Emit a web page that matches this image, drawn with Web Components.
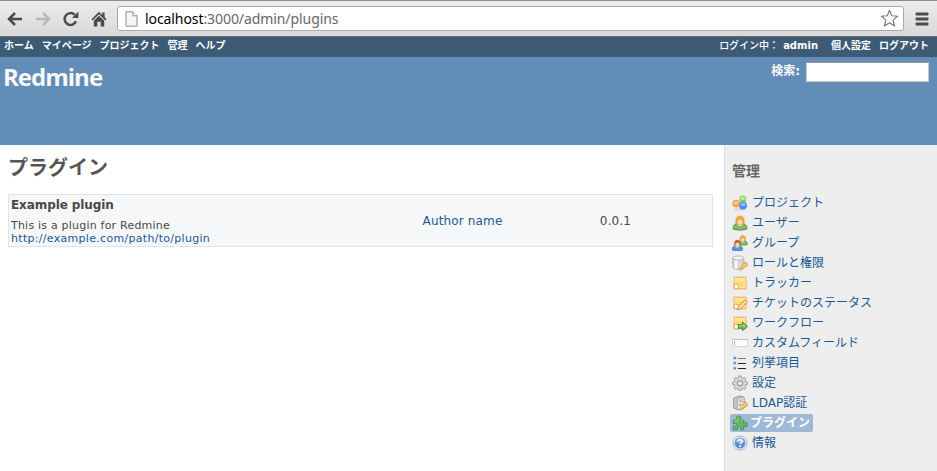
<!DOCTYPE html>
<html lang="ja">
<head>
<meta charset="utf-8">
<title>Redmine</title>
<style>
html,body{margin:0;height:100%;overflow:hidden;background:#fff}
body{font-family:"DejaVu Sans","Noto Sans CJK JP",sans-serif;font-size:12px;color:#484848}
</style>
</head>
<body>
<redmine-app></redmine-app>
<script>
const define = (name, html) => customElements.define(name, class extends HTMLElement {
  constructor() {
    super();
    const t = document.createElement('template');
    t.innerHTML = html;
    this.attachShadow({mode: 'open'}).append(t.content.cloneNode(true));
  }
});

const note = `<path d="M2 2.2h12v11.6H2z" fill="#fff6dc" stroke="#eea64a"/><path d="M3.2 3.4h9.6v9.2H6.8L3.2 9.4z" fill="#fcdc6c"/><path d="M3.2 3.4h9.6v3H3.2z" fill="#fde795"/><path d="M2.2 9l4 .8.6 3.9H2.2z" fill="#fff" stroke="#e79b35" stroke-width=".8"/>`;
const keyShape = `<path d="M7.6 13.5l3-2.8q-.5-2.2 1.2-3.2 2.2-.9 3.3 1 .8 2.3-1.2 3.4-1 .4-1.8 0l-.9.9-.2 1-1 .1-.2 1-1.5.2z" fill="#fbd268" stroke="#c8902c" stroke-width=".8"/><circle cx="13.2" cy="9.2" r=".9" fill="#fff8dc" stroke="#c8902c" stroke-width=".4"/>`;
const person = (x, y, s, shirt, edge, hair) => `<g transform="translate(${x} ${y}) scale(${s})"><path d="M1.1 14.3Q.8 9.4 4.6 9h6.8q4 .4 3.5 5.3-6.9 1.8-13.8 0z" fill="${shirt}" stroke="${edge}" stroke-width=".8"/><path d="M5 9q3 4.4 6 0l-1.2-1.5H6.2z" fill="#fbd9b0"/><ellipse cx="8" cy="6.2" rx="3.1" ry="3.6" fill="#fddcb4" stroke="#d09450" stroke-width=".5"/><path d="M3.8 8.8Q2.8.9 8 .9t4.2 7.9l-1.3-.7q.2-3.4-1.8-3.9-2.4.8-3.8.6-.2 2-.1 3.4z" fill="${hair}" stroke="#c8842c" stroke-width=".4"/></g>`;

const icons = {
  projects: `<ellipse cx="8" cy="14.5" rx="6.5" ry=".9" fill="#cfcfcf"/><circle cx="10.9" cy="4" r="3.4" fill="#80d455"/><circle cx="4.1" cy="8.6" r="3.8" fill="#f7a24a"/><circle cx="11" cy="10.4" r="3.9" fill="#4a8ced"/><ellipse cx="10.9" cy="3.4" rx="2.3" ry="1.8" fill="#b6f08f"/><ellipse cx="4" cy="7.7" rx="2.5" ry="1.8" fill="#ffc488"/><ellipse cx="11" cy="9.4" rx="2.6" ry="1.8" fill="#8abcff"/>`,
  user: person(0, 0, 1, '#83b769', '#4c8645', '#f3a935'),
  group: person(5.3, 0, .68, '#83b769', '#4c8645', '#f3a935') + person(-.6, 4.4, .75, '#5694e5', '#2d66b6', '#ad6840'),
  roles: `<path d="M.8 3v9.3c0 1.2 2.4 2 5.5 2s5.5-.8 5.5-2V3z" fill="#d7d7d7" stroke="#a9a9a9" stroke-width=".8"/><path d="M2.8 5v8.4h2.6V5z" fill="#fafafa"/><ellipse cx="6.3" cy="3" rx="5.5" ry="2" fill="#f5f5f5" stroke="#a9a9a9" stroke-width=".8"/>${keyShape}`,
  tracker: note,
  status: `${note}<path d="M5.4 14.8l1-3.4 6.9-6.6 2.2 2.2-7 6.9z" fill="#ffd77d" stroke="#bf8038" stroke-width=".8"/><path d="M7.5 12.7l6.6-6.6" stroke="#fff3c0"/>`,
  workflow: `${note}<path d="M6.2 9.6h4.3V7l5 4.4-5 4.3v-2.5H6.2z" fill="#7cbd60" stroke="#3b8636" stroke-width=".9"/><path d="M7 10.7h4.4V9.4l2.3 1.9" fill="none" stroke="#b9e2a2" stroke-width=".8"/>`,
  field: `<path d="M.5 4.5h15v7H.5z" fill="#fcfcfc" stroke="#d2d2d2"/><path d="M.5 4.5h15" stroke="#c0c0c0"/><path d="M2.5 6v4" stroke="#aaa"/>`,
  list: `<g fill="#a9c2f6"><rect x="1" y="1.2" width="3.4" height="3.2" rx=".6"/><rect x="1" y="6.3" width="3.4" height="3.2" rx=".6"/><rect x="1" y="11.4" width="3.4" height="3.2" rx=".6"/></g><g fill="#6181bd"><path d="M2 2.5h2v1.5H2zM2 7.6h2v1.5H2zM2 12.7h2v1.5H2z"/></g><path d="M6 3.5h8" stroke="#777"/><path d="M6 8.5h8M6 13.5h8" stroke="#222"/>`,
  settings: `<path d="M6.9.9h2.2l.4 2.1 1.3.5 1.7-1.2 1.5 1.5-1.1 1.8.5 1.2 2 .4v2.2l-2 .4-.5 1.3 1.1 1.7-1.5 1.6-1.7-1.1-1.3.5-.4 2H6.9l-.4-2-1.3-.5-1.7 1.1L2 12.8l1.1-1.7-.5-1.3-2-.4V7.2l2-.4.5-1.2L2 3.8l1.5-1.5 1.7 1.2L6.5 3z" fill="#dcdcdc" stroke="#888" stroke-width=".8"/><circle cx="8" cy="8.3" r="3.9" fill="#c6c6c6"/><circle cx="8" cy="8.3" r="2.5" fill="#eee" stroke="#777" stroke-width=".8"/>`,
  ldap: `<path d="M1.6 3.2L7 1l5 1.1v10.8L6 15l-4.4-1.9z" fill="#c5c5c5" stroke="#8e8e8e" stroke-width=".8"/><path d="M5.6 3.6L12 2.3v10.8l-6.4 1.7z" fill="#f1f1f1" stroke="#999" stroke-width=".7"/><path d="M7.2 5.4l3.4-.7M7.2 7.2l3.4-.7" stroke="#9c9c9c"/><path d="M7.2 9.5l2-.5v1.6l-2 .5z" fill="#59b34a"/>${keyShape}`,
  plugin: `<path d="M1.2 5h3.9c.3-1-.7-1.5-.7-2.6 0-2 4.5-2 4.5.1 0 1.1-.9 1.5-.7 2.5h3.5v3.3c1 .2 1.2-.8 2.2-.8 2.3 0 2.2 4.3 0 4.3-1 0-1.2-.9-2.2-.7v3.7H8.3c-.2-1 .6-1.2.6-2 0-1.7-3.8-1.7-3.8 0 0 .8.8 1 .6 2H1.2v-3.6c1 .2 1.2.6 2 .5 1.7-.2 1.6-3.4 0-3.4-.9 0-1 .6-2 .6z" fill="#66b565" stroke="#3b9044" stroke-width=".8"/><path d="M2.3 5.9h4c.2-1.6-.7-2.2-.7-3.2M9 5.9h1.8" fill="none" stroke="#a0d796"/>`,
  info: `<circle cx="8" cy="8" r="7" fill="#f4f8fe" stroke="#85abd9" stroke-width=".9"/><circle cx="8" cy="8" r="5.5" fill="#5d8fcd"/><path d="M3.2 6.9Q5 3 8 3t4.8 3.9Q8 8.5 3.2 6.9z" fill="#8fb5e1"/><path d="M6 6.5q0-1.8 2.1-1.8 2 0 2 1.6 0 .9-1 1.5-.9.5-.9 1.3" fill="none" stroke="#fff" stroke-width="1.4"/><circle cx="8.1" cy="11" r=".9" fill="#fff"/>`
};

customElements.define('menu-icon', class extends HTMLElement {
  constructor() {
    super();
    this.attachShadow({mode: 'open'}).innerHTML = `<style>:host{display:block;width:16px;height:16px;flex:none}svg{display:block}</style><svg width="16" height="16" viewBox="0 0 16 16">${icons[this.getAttribute('name')]}</svg>`;
  }
});

define('side-item', `<style>
:host{display:flex;height:20px;align-items:center;color:#1a5a94}
.row{display:flex;align-items:center;height:20px;padding:0 3px 0 2px;border-radius:2px;white-space:nowrap}
.label{margin-left:4px;line-height:20px}
:host([selected]) .row{height:18px;background:#9db9d5;color:#fff;font-weight:700}
:host([selected]) .label{margin-left:2px;line-height:18px}
</style><div class="row"><slot name="icon"></slot><span class="label"><slot></slot></span></div>`);

define('admin-sidebar', `<style>
:host{display:block;width:212px;flex:none;background:#eee;border-left:1px solid #ddd;box-sizing:content-box}
h3{margin:16px 0 12px 7px;font-size:14px;line-height:20px;color:#666}
nav{padding-left:5px}
</style><h3>管理</h3><nav>${[
  ['projects','プロジェクト'],['user','ユーザー'],['group','グループ'],['roles','ロールと権限'],['tracker','トラッカー'],
  ['status','チケットのステータス'],['workflow','ワークフロー'],['field','カスタムフィールド'],['list','列挙項目'],
  ['settings','設定'],['ldap','LDAP認証'],['plugin','プラグイン'],['info','情報']
].map(([i, t]) => `<side-item${i === 'plugin' ? ' selected' : ''}><menu-icon slot="icon" name="${i}"></menu-icon>${t}</side-item>`).join('')}</nav>`);

define('browser-bar', `<style>
:host{display:flex;align-items:center;height:37px;box-sizing:border-box;border-top:1px solid #8b8b8b;border-bottom:1px solid #6d6d6d;background:linear-gradient(#ececec,#d9d9d9);padding:0 8px 0 7px}
svg{display:block;flex:none}
.nav{display:flex;gap:12px}
.url{display:flex;align-items:center;flex:1;height:25px;box-sizing:border-box;margin-left:10px;margin-right:11px;padding:0 4px 0 7px;background:#fff;border:1px solid #a9a9a9;border-radius:3px}
.text{flex:1;margin-left:7px;font:14px/22px "Noto Sans",sans-serif;color:#666;white-space:nowrap;letter-spacing:-.08px}
b{font-weight:400;color:#000}
</style>
<div class="nav">
<svg width="16" height="16" viewBox="0 0 16 16" fill="none" stroke="#4b4b4b" stroke-width="2.5"><path d="M15 8H2.5M8 2L2 8l6 6"/></svg>
<svg width="16" height="16" viewBox="0 0 16 16" fill="none" stroke="#b7b7b7" stroke-width="2.5"><path d="M1 8h12.5M8 2l6 6-6 6"/></svg>
<svg width="16" height="16" viewBox="0 0 16 16"><path d="M13 10.3A5.9 5.9 0 1 1 11.7 3.8" fill="none" stroke="#4b4b4b" stroke-width="2.5"/><path d="M15.4.5v6.4H9z" fill="#4b4b4b"/></svg>
<svg width="16" height="16" viewBox="0 0 16 16"><path d="M8 .8L.5 8.3l1.2 1.1L8 3.3l6.3 6.1 1.2-1.1L13.6 6V1.6h-2.4v2.3z" fill="#4b4b4b"/><path d="M8 4.7l5.2 5v5.8H9.7v-4.7H6.3v4.7H2.8V9.7z" fill="#4b4b4b"/></svg>
</div>
<div class="url">
<svg width="13" height="16" viewBox="0 0 13 16"><path d="M1 .8h7l4 4v10.4H1z" fill="#f6f6f6" stroke="#8d8d8d"/><path d="M8 .8v4h4" fill="#fff" stroke="#8d8d8d"/></svg>
<div class="text"><b>localhost</b>:3000/admin/plugins</div>
<svg width="19" height="19" viewBox="0 0 19 19"><path d="M9.5 1.2l2.2 5.6 6 .4-4.6 3.9 1.5 5.9-5.1-3.3L4.4 17l1.5-5.9L1.3 7.2l6-.4z" fill="#fff" stroke="#777" stroke-width="1.1" stroke-linejoin="round"/></svg>
</div>
<svg width="14" height="14" viewBox="0 0 14 14" fill="#4b4b4b"><rect x=".5" y=".5" width="13" height="3" rx="1"/><rect x=".5" y="5.5" width="13" height="3" rx="1"/><rect x=".5" y="10.5" width="13" height="3" rx="1"/></svg>`);

define('top-menu', `<style>
:host{display:flex;justify-content:space-between;height:20px;box-sizing:border-box;padding:0 8px 0 4px;background:#3e5b76;color:#fff;font-size:10px;line-height:17px;font-weight:700;white-space:nowrap}
div{display:flex;gap:8px}
.user{font-weight:500;margin-right:-4px}.name{margin-right:5px}
</style>
<div><span>ホーム</span><span>マイページ</span><span>プロジェクト</span><span>管理</span><span>ヘルプ</span></div>
<div><span class="user">ログイン中：</span><span class="name">admin</span><span>個人設定</span><span>ログアウト</span></div>`);

define('site-header', `<style>
:host{display:flex;justify-content:space-between;height:88px;box-sizing:border-box;background:#628db6;color:#f8f8f8;padding:3px 8px 0 3px}
h1{margin:0;font:700 24px/33px "Open Sans",sans-serif;letter-spacing:-1px}
.search{display:flex;align-items:flex-start;gap:6px;font-size:12px;line-height:23px;font-weight:700}
.box{width:123px;height:20px;margin-top:2px;box-sizing:border-box;background:#fff;border:1px solid #c8c8c8;border-top-color:#999}
</style><h1>Redmine</h1><div class="search"><span>検索:</span><div class="box"></div></div>`);

define('plugin-row', `<style>
:host{display:grid;grid-template-columns:339px 229px 77px 1fr;height:53px;box-sizing:border-box;border:1px solid #e2e3e5;background:#f6f7f8;align-items:center}
.desc{padding-left:2px;align-self:start;white-space:nowrap}
.name{font-weight:700;line-height:20px;letter-spacing:-.1px}
small{display:block;font-size:11px;line-height:13px}
.first{margin-top:4px;letter-spacing:.21px}
.link{letter-spacing:.3px}
.link,.author{color:#1a5a94}.author,.ver{text-align:center;letter-spacing:.15px}
</style>
<div class="desc"><div class="name"><slot name="name"></slot></div><small class="first"><slot name="description"></slot></small><small class="link"><slot name="url"></slot></small></div>
<div class="author"><slot name="author"></slot></div><div class="ver"><slot name="version"></slot></div>`);

define('plugin-list', `<style>
:host{display:block;flex:1;min-width:0;box-sizing:border-box;padding:9px 11px 0 8px}
h2{margin:0 0 11px;font-size:20px;line-height:29px;color:#555}
</style><h2>プラグイン</h2>
<plugin-row><span slot="name">Example plugin</span><span slot="description">This is a plugin for Redmine</span><span slot="url">http://example.com/path/to/plugin</span><span slot="author">Author name</span><span slot="version">0.0.1</span></plugin-row>`);

define('redmine-app', `<style>
:host{display:flex;flex-direction:column;height:100vh}
main{display:flex;flex:1;min-height:0}
</style><browser-bar></browser-bar><top-menu></top-menu><site-header></site-header>
<main><plugin-list></plugin-list><admin-sidebar></admin-sidebar></main>`);
</script>
</body>
</html>
